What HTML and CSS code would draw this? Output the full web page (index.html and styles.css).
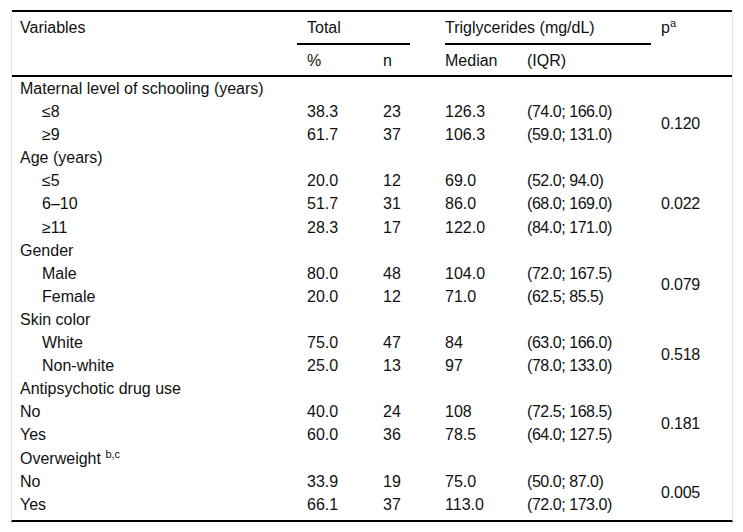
FILE: index.html
```html
<!DOCTYPE html>
<html>
<head>
<meta charset="utf-8">
<link rel="stylesheet" href="styles.css">
</head>
<body>
<div class="wrap">
<table class="tbl">
<colgroup>
<col class="c1"><col class="c2"><col class="c3"><col class="c4"><col class="c5"><col class="c6">
</colgroup>
<thead>
<tr>
<th class="h1 first" rowspan="2">Variables</th>
<th class="grp" colspan="2"><div class="grp-total">Total</div></th>
<th class="grp" colspan="2"><div class="grp-tg">Triglycerides (mg/dL)</div></th>
<th class="h1" rowspan="2">p<sup>a</sup></th>
</tr>
<tr>
<th class="h2">%</th>
<th class="h2">n</th>
<th class="h2">Median</th>
<th class="h2">(IQR)</th>
</tr>
</thead>
<tbody>
<tr><td class="first">Maternal level of schooling (years)</td><td></td><td></td><td></td><td></td><td></td></tr>
<tr><td class="first sub">≤8</td><td>38.3</td><td>23</td><td>126.3</td><td class="iqr">(74.0; 166.0)</td><td class="pv" rowspan="2">0.120</td></tr>
<tr><td class="first sub">≥9</td><td>61.7</td><td>37</td><td>106.3</td><td class="iqr">(59.0; 131.0)</td></tr>
<tr><td class="first">Age (years)</td><td></td><td></td><td></td><td></td><td></td></tr>
<tr><td class="first sub">≤5</td><td>20.0</td><td>12</td><td>69.0</td><td class="iqr">(52.0; 94.0)</td><td class="pv" rowspan="3">0.022</td></tr>
<tr><td class="first sub">6–10</td><td>51.7</td><td>31</td><td>86.0</td><td class="iqr">(68.0; 169.0)</td></tr>
<tr><td class="first sub">≥11</td><td>28.3</td><td>17</td><td>122.0</td><td class="iqr">(84.0; 171.0)</td></tr>
<tr><td class="first">Gender</td><td></td><td></td><td></td><td></td><td></td></tr>
<tr><td class="first sub">Male</td><td>80.0</td><td>48</td><td>104.0</td><td class="iqr">(72.0; 167.5)</td><td class="pv" rowspan="2">0.079</td></tr>
<tr><td class="first sub">Female</td><td>20.0</td><td>12</td><td>71.0</td><td class="iqr">(62.5; 85.5)</td></tr>
<tr><td class="first">Skin color</td><td></td><td></td><td></td><td></td><td></td></tr>
<tr><td class="first sub">White</td><td>75.0</td><td>47</td><td>84</td><td class="iqr">(63.0; 166.0)</td><td class="pv" rowspan="2">0.518</td></tr>
<tr><td class="first sub">Non-white</td><td>25.0</td><td>13</td><td>97</td><td class="iqr">(78.0; 133.0)</td></tr>
<tr><td class="first">Antipsychotic drug use</td><td></td><td></td><td></td><td></td><td></td></tr>
<tr><td class="first">No</td><td>40.0</td><td>24</td><td>108</td><td class="iqr">(72.5; 168.5)</td><td class="pv" rowspan="2">0.181</td></tr>
<tr><td class="first">Yes</td><td>60.0</td><td>36</td><td>78.5</td><td class="iqr">(64.0; 127.5)</td></tr>
<tr><td class="first">Overweight <sup>b,c</sup></td><td></td><td></td><td></td><td></td><td></td></tr>
<tr><td class="first">No</td><td>33.9</td><td>19</td><td>75.0</td><td class="iqr">(50.0; 87.0)</td><td class="pv" rowspan="2">0.005</td></tr>
<tr><td class="first">Yes</td><td>66.1</td><td>37</td><td>113.0</td><td class="iqr">(72.0; 173.0)</td></tr>
</tbody>
</table>
</div>
</body>
</html>
```
FILE: styles.css
```css
html, body {
  margin: 0;
  padding: 0;
  background: #fff;
}
body {
  font-family: "Liberation Sans", Arial, sans-serif;
  font-size: 16px;
  color: #111;
}
.wrap {
  margin: 10px 0 0 11px;
  width: 720px;
  border-left: 1px solid #e4e4e4;
  border-right: 1px solid #e4e4e4;
  border-bottom: 2px solid #000;
  padding-bottom: 4px;
}
.tbl {
  width: 720px;
  table-layout: fixed;
  border-collapse: separate;
  border-spacing: 0;
  border-top: 2px solid #000;
}
.c1 { width: 285px; }
.c2 { width: 76px; }
.c3 { width: 62px; }
.c4 { width: 82px; }
.c5 { width: 134px; }
.c6 { width: 81px; }
th {
  font-weight: normal;
  text-align: left;
  padding: 0 0 0 10px;
  line-height: 17px;
}
th.first, td.first { padding-left: 8px; }
td.sub { padding-left: 30px; }
th.h1 {
  vertical-align: top;
  padding-top: 7px;
  border-bottom: 2px solid #000;
}
th.h2 {
  padding-top: 7px;
  padding-bottom: 6px;
  border-bottom: 2px solid #000;
}
th.grp {
  padding: 0;
  vertical-align: top;
}
.grp-total {
  padding: 7px 0 7px 10px;
  margin-right: 25px;
  border-bottom: 2px solid #000;
}
.grp-tg {
  padding: 7px 0 7px 0;
  margin-left: 10px;
  border-bottom: 2px solid #000;
}
sup {
  font-size: 11px;
  line-height: 0;
  vertical-align: 6px;
}
td {
  padding: 0 0 0 10px;
  line-height: 23.1px;
  height: 23.1px;
  white-space: nowrap;
}
td.num { letter-spacing: -0.2px; }
td.iqr { letter-spacing: -0.45px; }
td.pv {
  vertical-align: middle;
  letter-spacing: -0.2px;
}
```
